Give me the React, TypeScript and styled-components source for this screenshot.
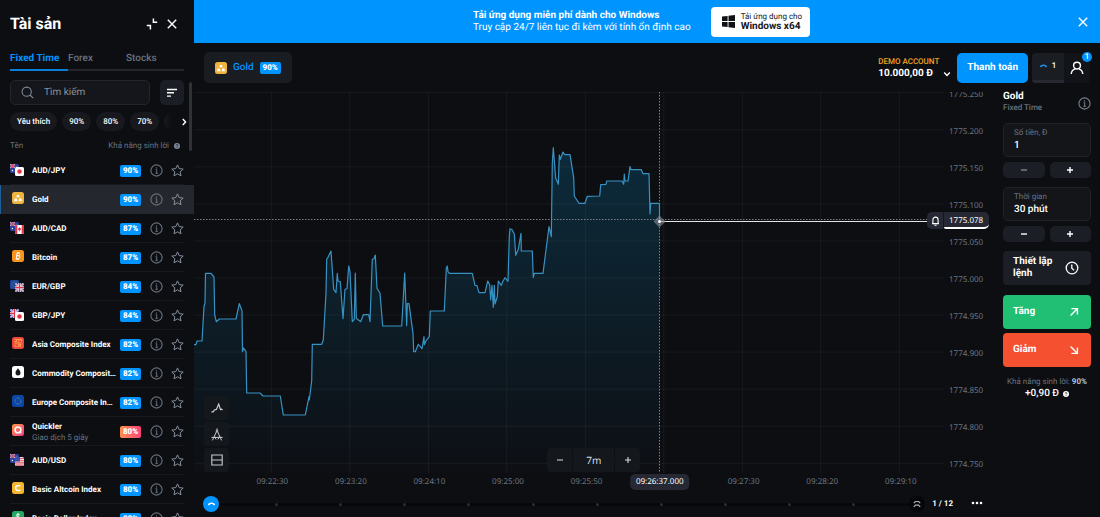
import React from "react";
import styled, { createGlobalStyle, css } from "styled-components";

const c = {
  bg: "#0d0e12",
  panel: "#1b1e24",
  line: "#1b1c21",
  blue: "#0094ff",
  muted: "#69737f",
  white: "#ffffff",
};

const GlobalStyle = createGlobalStyle`
  *, *::before, *::after { box-sizing: border-box; }
  body { margin: 0; background: ${c.bg}; color: ${c.white}; font-family: Roboto, "Liberation Sans", sans-serif; font-size: 8px; line-height: 12px; text-rendering: geometricPrecision; }
  button, input { font: inherit; color: inherit; text-rendering: inherit; background: none; border: 0; padding: 0; margin: 0; min-width: 0; }
  button { cursor: pointer; }
  ul, h1, h2, p { margin: 0; padding: 0; list-style: none; }
  svg { display: block; flex: none; }
`;

const Page = styled.div`
  display: flex;
  height: 100vh;
  overflow: hidden;
`;

/* ---------- Sidebar ---------- */

const Sidebar = styled.aside`
  position: relative;
  flex: none;
  width: 194px;
  display: flex;
  flex-direction: column;
  overflow: hidden;
  & > * { flex: none; }
`;

const SidebarHead = styled.header`
  display: flex;
  align-items: center;
  gap: 8px;
  height: 48px;
  padding: 0 16px 0 10px;
`;

const Title = styled.h1`
  flex: 1;
  font-size: 16px;
  line-height: 20px;
  font-weight: 700;
`;

const IconButton = styled.button`
  display: flex;
  align-items: center;
  justify-content: center;
`;

const Tabs = styled.div`
  display: grid;
  grid-template-columns: repeat(3, 1fr);
  margin: 0 10px;
`;

const Tab = styled.button<{ $active?: boolean }>`
  height: 23px;
  text-align: left;
  font-size: 10px;
  font-weight: ${(p) => (p.$active ? 700 : 500)};
  color: ${(p) => (p.$active ? c.blue : c.muted)};
  border-bottom: 2px solid ${(p) => (p.$active ? "#0b7fd8" : "#24262b")};
`;

const SearchRow = styled.div`
  display: flex;
  gap: 10px;
  margin: 9px 10px 0;
`;

const SearchBox = styled.label`
  flex: 1;
  min-width: 0;
  display: flex;
  align-items: center;
  gap: 10px;
  height: 25px;
  padding: 0 10px;
  border: 1px solid #22252b;
  border-radius: 5px;
  background: #14161b;
  color: #7f8b99;
`;

const SearchInput = styled.input`
  flex: 1;
  outline: none;
  font-size: 10px;
  &::placeholder { color: #8a939e; opacity: 1; }
`;

const FilterButton = styled(IconButton)`
  width: 24px;
  height: 25px;
  border-radius: 5px;
  background: ${c.panel};
`;

const Chips = styled.div`
  display: flex;
  align-items: center;
  gap: 5px;
  height: 19px;
  margin: 7px 6px 0 10px;
`;

const Chip = styled.button`
  flex: none;
  height: 19px;
  padding: 0 7px;
  border-radius: 10px;
  background: #17191e;
  font-weight: 500;
`;

const ChipTail = styled.span`
  width: 8px;
  height: 17px;
  border-radius: 10px 0 0 10px;
  background: linear-gradient(90deg, #17191e, ${c.bg});
`;

const ChipsNext = styled(IconButton)`
  margin-left: auto;
`;

const ListHead = styled.div`
  display: flex;
  justify-content: space-between;
  align-items: center;
  height: 25px;
  padding: 5px 14px 0 10px;
  color: ${c.muted};
`;

const HeadHint = styled.span`
  display: flex;
  align-items: center;
  gap: 5px;
`;

const Thumb = styled.div`
  position: absolute;
  right: 2px;
  top: 82px;
  width: 3px;
  height: 69px;
  border-radius: 2px;
  background: #303237;
`;

const AssetRow = styled.li<{ $selected?: boolean }>`
  display: flex;
  align-items: center;
  height: 29px;
  padding: 0 10px;
  position: relative;
  &::after {
    content: "";
    position: absolute;
    left: 10px;
    right: 10px;
    bottom: 0;
    height: 1px;
    background: #17191d;
  }
  ${(p) =>
    p.$selected &&
    css`
      background: #25272e;
      box-shadow: inset 1px 0 0 #1d5f96;
      &::after { display: none; }
    `}
`;

const AssetName = styled.button`
  flex: 1;
  display: flex;
  align-items: center;
  gap: 7px;
  margin-right: 3px;
  text-align: left;
`;

const NameText = styled.span`
  flex: 1;
  min-width: 0;
  font-weight: 700;
  line-height: 11px;
  overflow: hidden;
  white-space: nowrap;
  text-overflow: ellipsis;
`;

const SubText = styled.span`
  display: block;
  font-weight: 400;
  color: ${c.muted};
`;

const Badge = styled.span<{ $hot?: boolean }>`
  flex: none;
  padding: 0 2px;
  min-width: 21px;
  text-align: center;
  border-radius: 2px;
  font-weight: 900;
  line-height: 12px;
  background: ${(p) => (p.$hot ? "linear-gradient(90deg, #ff8f4a, #f8447e)" : c.blue)};
`;

const RowActions = styled.div`
  display: flex;
  gap: 8px;
  margin-left: 9px;
  color: #68717c;
`;

/* ---------- Main ---------- */

const Main = styled.main`
  flex: 1;
  min-width: 0;
  display: flex;
  flex-direction: column;
`;

const Banner = styled.section`
  flex: none;
  display: flex;
  align-items: center;
  justify-content: center;
  gap: 20px;
  height: 43px;
  padding: 0 11px 0 32px;
  background: ${c.blue};
`;

const BannerText = styled.p`
  margin-left: auto;
  font-size: 10px;
  line-height: 12px;
`;

const DownloadButton = styled.button`
  display: flex;
  align-items: center;
  gap: 6px;
  height: 30px;
  padding: 0 8px 0 11px;
  border-radius: 4px;
  background: ${c.white};
  color: #15171b;
  text-align: left;
  line-height: 10px;
`;

const DownloadTarget = styled.strong`
  display: block;
  font-size: 10px;
  font-weight: 700;
`;

const BannerClose = styled(IconButton)`
  margin-left: auto;
`;

const Header = styled.header`
  flex: none;
  display: flex;
  align-items: center;
  height: 49px;
  padding: 0 10px;
`;

const AssetTab = styled.button`
  display: flex;
  align-items: center;
  gap: 6px;
  height: 31px;
  padding: 0 11px;
  border-radius: 5px;
  background: #191c21;
  color: ${c.blue};
  font-size: 10px;
  font-weight: 500;
`;

const AssetTabBadge = styled(Badge)`
  font-size: 8px;
  color: ${c.white};
`;

const Account = styled.button`
  display: flex;
  align-items: flex-end;
  gap: 4px;
  margin-left: auto;
  text-align: left;
`;

const AccountKind = styled.span`
  display: block;
  color: #f5a623;
  font-weight: 500;
`;

const Balance = styled.span`
  font-size: 10px;
  font-weight: 700;
`;

const ChevronSlot = styled.span`
  padding-bottom: 2px;
`;

const DepositButton = styled.button`
  height: 30px;
  margin: 0 4px 0 6px;
  padding: 0 10px;
  border-radius: 5px;
  background: ${c.blue};
  font-size: 10px;
  font-weight: 700;
`;

const UserGroup = styled.div`
  position: relative;
  display: flex;
  height: 30px;
  border-radius: 4px;
  background: #121419;
`;

const StatusButton = styled(IconButton)`
  width: 32px;
  gap: 5px;
  border-bottom: 3px solid #26292f;
  border-radius: 4px 0 0 4px;
  background: #1a1d22;
  font-weight: 500;
`;

const ProfileButton = styled(IconButton)`
  width: 26px;
`;

const Notice = styled.span`
  position: absolute;
  top: -1px;
  right: -2px;
  width: 10px;
  height: 10px;
  border-radius: 50%;
  background: ${c.blue};
  text-align: center;
  line-height: 10px;
  font-weight: 500;
`;

const Body = styled.div`
  flex: 1;
  min-height: 0;
  display: flex;
`;

/* ---------- Chart ---------- */

const ChartColumn = styled.section`
  flex: 1;
  min-width: 0;
  display: flex;
  flex-direction: column;
  font-family: "Noto Sans", sans-serif;
`;

const Stage = styled.div`
  position: relative;
  flex: 1;
  min-height: 0;
  display: flex;
`;

const Plot = styled.svg`
  flex: 1;
  min-width: 0;
  width: 0;
  height: 100%;
`;

const PriceAxis = styled.div`
  width: 53px;
  overflow: hidden;
`;

const PriceList = styled.ul`
  display: flex;
  flex-direction: column;
  height: 107%;
  margin-top: -16px;
  padding-left: 5px;
  color: #6c7681;
`;

const PriceLabel = styled.li`
  flex: 1;
  display: flex;
  align-items: center;
`;

const PriceTag = styled.div`
  position: absolute;
  top: 31.5%;
  right: 8px;
  display: flex;
  border-radius: 5px;
  background: #262933;
`;

const BellButton = styled(IconButton)`
  width: 17px;
  height: 17px;
  border-right: 1px solid #15171c;
`;

const PriceValue = styled.span`
  width: 45px;
  height: 17px;
  padding: 3px 5px 0;
  border-bottom: 2px solid ${c.white};
  border-radius: 0 5px 5px 2px;
`;

const ToolStack = styled.div`
  position: absolute;
  left: 10px;
  bottom: 1px;
  display: flex;
  flex-direction: column;
  gap: 2px;
`;

const ToolButton = styled(IconButton)`
  width: 25px;
  height: 24px;
  border-radius: 4px;
  background: #14181d;
  color: #c8ccd0;
`;

const ZoomControl = styled.div`
  position: absolute;
  left: 44%;
  bottom: 1px;
  display: flex;
  gap: 1px;
  border-radius: 4px;
  overflow: hidden;
  color: #dadde0;
`;

const ZoomCell = styled.button<{ $wide?: boolean }>`
  display: flex;
  align-items: center;
  justify-content: center;
  width: ${(p) => (p.$wide ? 41 : 25)}px;
  height: 24px;
  background: #14171c;
  font-size: 10px;
`;

const TimeAxis = styled.div`
  position: relative;
  flex: none;
  display: flex;
  height: 18px;
  padding: 0 57px 0 39px;
  align-items: center;
  color: #6c7681;
`;

const TimeLabel = styled.span`
  flex: 1;
  text-align: center;
`;

const TimeTag = styled.span`
  position: absolute;
  left: 58%;
  transform: translateX(-50%);
  padding: 2px 6px;
  border-radius: 5px;
  background: #262933;
  color: ${c.white};
`;

const Pager = styled.div`
  flex: none;
  display: flex;
  align-items: center;
  height: 26px;
  padding: 0 14px 0 9px;
  font-family: Roboto, sans-serif;
`;

const PagerCurrent = styled(IconButton)`
  width: 16px;
  height: 16px;
  border-radius: 50%;
  background: ${c.blue};
`;

const PagerTrack = styled.div`
  flex: 1;
  display: flex;
  align-items: center;
  justify-content: space-between;
  height: 3px;
  padding: 0 54px 0 56px;
  background: #07080b;
`;

const Dot = styled.i`
  width: 3px;
  height: 3px;
  border-radius: 50%;
  background: #2b2e33;
`;

const PagerEnd = styled(IconButton)`
  width: 16px;
  height: 16px;
  border-radius: 50%;
  background: #050608;
  color: #a9b2ba;
`;

const PagerCount = styled.span`
  margin: 0 18px 0 7px;
  font-weight: 700;
`;

/* ---------- Trade panel ---------- */

const Trade = styled.form`
  flex: none;
  width: 103px;
  padding: 0 9px 0 6px;
`;

const TradeHead = styled.div`
  display: flex;
  align-items: center;
  justify-content: space-between;
  height: 22px;
  margin-bottom: 9px;
  color: #7b848e;
`;

const TradeTitle = styled.h2`
  color: ${c.white};
  font-size: 10px;
  line-height: 10px;
  font-weight: 700;
`;

const TradeKind = styled.p`
  color: ${c.muted};
  font-weight: 500;
`;

const Field = styled.label`
  display: block;
  height: 34px;
  padding: 3px 10px;
  border: 1px solid #202228;
  border-radius: 5px;
  background: #131519;
  color: ${c.muted};
`;

const FieldInput = styled.input`
  display: block;
  width: 100%;
  height: 13px;
  outline: none;
  color: ${c.white};
  font-size: 10px;
  font-weight: 500;
`;

const Stepper = styled.div`
  display: grid;
  grid-template-columns: 1fr 1fr;
  gap: 5px;
  margin: 5px 0 9px;
`;

const StepButton = styled(IconButton)`
  height: 16px;
  border-radius: 5px;
  background: ${c.panel};
  &:disabled { color: #7b848e; }
`;

const ActionButton = styled.button<{ $tone?: string }>`
  display: flex;
  align-items: center;
  justify-content: space-between;
  width: 100%;
  height: 34px;
  margin-bottom: ${(p) => (p.$tone ? 4 : 10)}px;
  padding: 0 12px 0 10px;
  border-radius: 4px;
  background: ${(p) => p.$tone ?? c.panel};
  font-size: 10px;
  line-height: 12px;
  font-weight: 700;
  text-align: left;
`;

const Profit = styled.p`
  padding-top: 5px;
  text-align: center;
  white-space: nowrap;
  color: ${c.muted};
`;

const ProfitRate = styled.b`
  color: #b3c3d6;
  font-weight: 700;
`;

const ProfitSum = styled.p`
  display: flex;
  align-items: center;
  justify-content: center;
  gap: 4px;
  font-size: 10px;
  font-weight: 500;
`;

/* ---------- Icons ---------- */

const InfoIcon = () => (
  <svg width="13" height="13" viewBox="0 0 13 13" fill="none" stroke="currentColor">
    <circle cx="6.5" cy="6.5" r="5.6" strokeWidth="1.1" />
    <path d="M5.6 5.7h1.1v3.6M5.4 9.3h2.4" strokeWidth="1" />
    <circle cx="6.5" cy="3.9" r=".7" fill="currentColor" stroke="none" />
  </svg>
);

const StarIcon = () => (
  <svg width="13" height="13" viewBox="0 0 13 13" fill="none" stroke="#84909c" strokeWidth="1" strokeLinejoin="round">
    <path d="M6.5 .9 8.2 4.6l4 .5-3 2.7.8 4L6.5 9.8 3 11.8l.8-4-3-2.7 4-.5z" />
  </svg>
);

const CloseIcon = () => (
  <svg width="12" height="12" viewBox="0 0 12 12" stroke="#fff" strokeWidth="1.4">
    <path d="m1.8 1.8 8.4 8.4M10.2 1.8l-8.4 8.4" />
  </svg>
);

const CollapseIcon = () => (
  <svg width="12" height="12" viewBox="0 0 12 12" fill="none" stroke="#fff" strokeWidth="1.5">
    <path d="M7.4 .6v3.600h3.800M.8 7.600h3.600v3.800" />
  </svg>
);

const SearchIcon = () => (
  <svg width="13" height="13" viewBox="0 0 13 13" fill="none" stroke="currentColor" strokeWidth="1.1">
    <circle cx="5.7" cy="5.7" r="4.6" />
    <path d="m9 9 3.2 3.2" />
  </svg>
);

const FilterIcon = () => (
  <svg width="12" height="10" viewBox="0 0 12 10" stroke="#fff" strokeWidth="1.4">
    <path d="M1 1.5h10M1 4.8h7M1 8.1h4" />
  </svg>
);

const ChevronIcon = ({ down }: { down?: boolean }) => (
  <svg width="8" height="8" viewBox="0 0 8 8" fill="none" stroke="#fff" strokeWidth="1.4">
    <path d={down ? "m1.2 2.6 2.8 2.8 2.8-2.8" : "m2.8 1 2.8 3-2.8 3"} />
  </svg>
);

const HelpIcon = ({ color }: { color: string }) => (
  <svg width="6" height="6" viewBox="0 0 6 6">
    <circle cx="3" cy="3" r="3" fill={color} />
    <path d="M2.1 2.4c0-1.2 1.8-1.2 1.8 0 0 .6-.9.6-.9 1.2M3 4.1v.7" fill="none" stroke={c.bg} strokeWidth=".7" />
  </svg>
);

const WindowsIcon = () => (
  <svg width="13" height="13" viewBox="0 0 13 13" fill="#101216">
    <path d="M0 1.600 5.600.9v5.200H0zM6.500.8 13 0v6.100H6.500zM0 7h5.600v5.100L0 11.400zM6.500 7H13v6l-6.500-.8z" />
  </svg>
);

const ProfileIcon = () => (
  <svg width="14" height="14" viewBox="0 0 14 14" fill="none" stroke="#fff" strokeWidth="1.4">
    <circle cx="7" cy="4.6" r="3.4" />
    <path d="M1.2 13c.3-3 2-4.6 4-5.2M12.8 13c-.3-3-2-4.6-4-5.2" />
  </svg>
);

const ArcIcon = ({ color }: { color: string }) => (
  <svg width="7" height="4" viewBox="0 0 7 4" fill="none" stroke={color} strokeWidth="1.700">
    <path d="M.4 3C1.500 .9 5 .4 6.600 3" />
  </svg>
);

const PlusMinusIcon = ({ plus, thin }: { plus?: boolean; thin?: boolean }) => (
  <svg width="8" height="8" viewBox="0 0 8 8" stroke="currentColor" strokeWidth={thin ? 1.1 : 1.4}>
    <path d={plus ? "M1 4h6M4 1v6" : "M1 4h6"} />
  </svg>
);

const ClockIcon = () => (
  <svg width="14" height="14" viewBox="0 0 14 14" fill="none" stroke="#fff" strokeWidth="1.3">
    <circle cx="7" cy="7" r="5.8" />
    <path d="M6.8 3.4v3.8l2.2 2" />
  </svg>
);

const ArrowIcon = ({ down }: { down?: boolean }) => (
  <svg width="10" height="10" viewBox="0 0 10 10" fill="none" stroke="#fff" strokeWidth="1.4">
    <path d={down ? "m1.600 1.600 6.400 6.400M8.400 2.400v6H2.400" : "m1.600 8.400 6.400-6.400M2.400 1.600h6v6"} />
  </svg>
);

const BellIcon = () => (
  <svg width="9" height="10" viewBox="0 0 9 10" fill="none" stroke="#fff" strokeWidth="1.1">
    <path d="M1 7.6h7M1.9 7.4V4c0-3.8 5.2-3.8 5.2 0v3.4M3.4 9.2h2.2" />
  </svg>
);

const ChartTypeIcon = () => (
  <svg width="12" height="10" viewBox="0 0 12 10" fill="none" stroke="currentColor" strokeWidth="1.2">
    <path d="M.4 8.800h1.800l1.200-1.800 2-.6L7.700 1l1.700 5.400 1-.3 1.200.9" />
  </svg>
);

const CompassIcon = () => (
  <svg width="12" height="13" viewBox="0 0 12 13" fill="none" stroke="currentColor" strokeWidth="1">
    <path d="M6 .4v1.800M5.500 3.600 1.400 12.400M6.500 3.600l4.100 8.800M.4 9.400h11.200M3.600 8.400 5 11.400M8.400 8.400 7 11.400" />
    <circle cx="6" cy="3" r=".9" />
  </svg>
);

const LayoutIcon = () => (
  <svg width="12" height="12" viewBox="0 0 12 12" fill="none" stroke="currentColor" strokeWidth="1.1">
    <path d="M.8 1h10.400v10H.8zM.8 6h10.400" />
  </svg>
);

const DoubleUpIcon = () => (
  <svg width="8" height="8" viewBox="0 0 8 8" fill="none" stroke="currentColor" strokeWidth="1.200">
    <path d="M.8 3.200 2.400 1.500h3.200L7.200 3.200M.8 6.800l1.600-1.700h3.200l1.600 1.700" />
  </svg>
);

const MoreIcon = () => (
  <svg width="12" height="6" viewBox="0 0 12 6" fill="#fff">
    <circle cx="2" cy="2" r="1.300" />
    <circle cx="6" cy="2" r="1.300" />
    <circle cx="10" cy="2" r="1.300" />
  </svg>
);

type FlagCode = "au" | "jp" | "ca" | "eu" | "gb" | "us";

/* Each flag is drawn in a 9 x 9 rounded tile. */
const flagArt: Record<FlagCode, React.ReactNode> = {
  au: (
    <>
      <rect width="9" height="9" rx="1.500" fill="#2b3f9e" />
      <path d="M0 0h5v4H0z" fill="#5468b8" />
      <path d="M0 0l5 4M5 0 0 4" stroke="#e9c9d4" strokeWidth=".7" />
      <path d="M2.500 0v4M0 2h5" stroke="#e0455c" strokeWidth=".8" />
      <circle cx="2.400" cy="6.500" r=".7" fill="#fff" />
      <circle cx="6.800" cy="3" r=".5" fill="#fff" />
      <circle cx="6.800" cy="6.800" r=".5" fill="#fff" />
    </>
  ),
  jp: (
    <>
      <rect width="9" height="9" rx="1.500" fill="#fff" />
      <circle cx="4.500" cy="4.500" r="2.200" fill="#e8303f" />
    </>
  ),
  ca: (
    <>
      <rect width="9" height="9" rx="1.500" fill="#fff" />
      <path d="M1.500 0H2.300v9H1.500A1.500 1.500 0 0 1 0 7.500v-6A1.500 1.500 0 0 1 1.500 0zM7.500 0h-.8v9h.8A1.500 1.500 0 0 0 9 7.500v-6A1.500 1.500 0 0 0 7.500 0z" fill="#e5354a" />
      <path d="m4.500 2 .7 1.200.9 0-.4 1.800-1 .8v1h-.4v-1l-1-.8-.4-1.800h.9z" fill="#e5354a" />
    </>
  ),
  eu: (
    <>
      <rect width="9" height="9" rx="1.500" fill="#1b469c" />
      <circle cx="4.500" cy="4.500" r="2.500" fill="none" stroke="#8f9a5c" strokeWidth=".7" strokeDasharray=".7 .6" />
    </>
  ),
  gb: (
    <>
      <rect width="9" height="9" rx="1.500" fill="#2c46a4" />
      <path d="m.5.5 8 8M8.500.5l-8 8" stroke="#fff" strokeWidth="1.500" />
      <path d="m.5.5 8 8M8.500.5l-8 8" stroke="#e0455c" strokeWidth=".5" />
      <path d="M4.500 0v9M0 4.500h9" stroke="#fff" strokeWidth="2.400" />
      <path d="M4.500 0v9M0 4.500h9" stroke="#e0354c" strokeWidth="1.300" />
    </>
  ),
  us: (
    <>
      <rect width="9" height="9" rx="1.500" fill="#f0dfe4" />
      <path d="M0 1.500h9M0 3.700h9M0 5.900h9M.5 8.100h8" stroke="#d9586a" strokeWidth="1.100" />
      <path d="M0 1.500A1.500 1.500 0 0 1 1.500 0H5v4.500H0z" fill="#37509f" />
    </>
  ),
};

const FlagPair = ({ a, b }: { a: FlagCode; b: FlagCode }) => (
  <svg width="15" height="15" viewBox="0 0 15 15">
    <g transform="translate(0 1)">{flagArt[a]}</g>
    <g transform="translate(5 4)">{flagArt[b]}</g>
  </svg>
);

type TileKind = "gold" | "bitcoin" | "asia" | "commodity" | "europe" | "quickler" | "altcoin" | "dollar";

const tileArt: Record<TileKind, { fill: string; art: React.ReactNode }> = {
  gold: {
    fill: "#eeb43d",
    art: <path d="m5 3h2l.7 2.300H4.300zM2.700 6.400h2l.8 2.800H1.800zM7.300 6.400h2l.9 2.800H6.500z" fill="#fff" />,
  },
  bitcoin: {
    fill: "#f7931a",
    art: (
      <path
        d="M4.800 3.200h2c1.700 0 1.500 2.500-.2 2.500H4.800m1.600 0c2 0 1.800 3-.3 3H3.700M5 3.200 4.300 8.700M5.600 2v1.200M7 2.200l-.1 1M5 8.800l-.2 1.200M6.400 8.800l-.1 1.100"
        fill="none"
        stroke="#fff"
        strokeWidth="1"
      />
    ),
  },
  asia: {
    fill: "#f2453f",
    art: (
      <path
        d="M2.500 2.500h2.200v2H2.500M5.200 2.500h1.800v2M7.600 2.500h2v2.200M2.500 6h7M3 7.400v2.200h1.700M5.500 7.400h1.600v2H5.500M9.500 7.400H8v2.200h1.500"
        fill="none"
        stroke="#ffb347"
        strokeWidth=".9"
      />
    ),
  },
  commodity: {
    fill: "#ffffff",
    art: <path d="M6 2.300c1.200 1.600 2.500 2.800 2.500 4.400a2.500 2.700 0 0 1-5 0C3.500 5.100 4.800 3.900 6 2.300z" fill="#17191d" />,
  },
  europe: {
    fill: "#0b47a8",
    art: <circle cx="6" cy="6" r="3" fill="none" stroke="#8e9a78" strokeWidth=".8" strokeDasharray=".8 .77" />,
  },
  quickler: {
    fill: "url(#quickler)",
    art: (
      <>
        <circle cx="6" cy="5.900" r="2.900" fill="none" stroke="#fff" strokeWidth="1.500" />
        <path d="m7.400 7.600 1.800 1.600" stroke="#fff" strokeWidth="1.400" />
      </>
    ),
  },
  altcoin: {
    fill: "#f6b52e",
    art: <path d="M8.200 4.300a2.600 2.600 0 1 0 0 3.400" fill="none" stroke="#fff" strokeWidth="1.500" />,
  },
  dollar: {
    fill: "#21a862",
    art: <path d="M7.800 4c-.8-1.200-3.600-1-3.500.5.1 1.800 3.600 1 3.600 3 0 1.600-3 1.600-3.800.2M6 2v8" fill="none" stroke="#fff" strokeWidth="1" />,
  },
};

const Tile = ({ kind }: { kind: TileKind }) => (
  <svg width="12" height="12" viewBox="0 0 12 12">
    <defs>
      <linearGradient id="quickler" x1="0" y1="0" x2="1" y2="1">
        <stop offset="0" stopColor="#ff9a45" />
        <stop offset="1" stopColor="#f23a86" />
      </linearGradient>
    </defs>
    <rect width="12" height="12" rx="2.500" fill={tileArt[kind].fill} />
    {tileArt[kind].art}
  </svg>
);

const IconSlot = styled.span`
  flex: none;
  width: 15px;
  height: 16px;
  display: flex;
  justify-content: center;
`;

/* ---------- Data ---------- */

type Asset = { name: string; rate: string; icon: React.ReactNode; note?: string; selected?: boolean };

const assets: Asset[] = [
  { name: "AUD/JPY", rate: "90%", icon: <FlagPair a="au" b="jp" /> },
  { name: "Gold", rate: "90%", icon: <Tile kind="gold" />, selected: true },
  { name: "AUD/CAD", rate: "87%", icon: <FlagPair a="au" b="ca" /> },
  { name: "Bitcoin", rate: "87%", icon: <Tile kind="bitcoin" /> },
  { name: "EUR/GBP", rate: "84%", icon: <FlagPair a="eu" b="gb" /> },
  { name: "GBP/JPY", rate: "84%", icon: <FlagPair a="gb" b="jp" /> },
  { name: "Asia Composite Index", rate: "82%", icon: <Tile kind="asia" /> },
  { name: "Commodity Composite Index", rate: "82%", icon: <Tile kind="commodity" /> },
  { name: "Europe Composite Index", rate: "82%", icon: <Tile kind="europe" /> },
  { name: "Quickler", rate: "80%", icon: <Tile kind="quickler" />, note: "Giao dịch 5 giây" },
  { name: "AUD/USD", rate: "80%", icon: <FlagPair a="au" b="us" /> },
  { name: "Basic Altcoin Index", rate: "80%", icon: <Tile kind="altcoin" /> },
  { name: "Basic Dollar Index", rate: "80%", icon: <Tile kind="dollar" /> },
];

const prices = ["1775.250", "1775.200", "1775.150", "1775.100", "1775.050", "1775.000", "1774.950", "1774.900", "1774.850", "1774.800", "1774.750"];
const times = ["09:22:30", "09:23:20", "09:24:10", "09:25:00", "09:25:50", "", "09:27:30", "09:28:20", "09:29:10"];

const W = 750;
const H = 381;
const NOW_X = 465.5;
const NOW_Y = 129.5;

const series =
  "0,252.7 2,252.7 3,249 8,249 10,214.5 11,211 11.5,181.3 17,181.3 20,185 20.7,223 22.3,229.7 25.3,227 42,227 45.3,211.7 48,218.7 48.5,259.7 49.3,256 52,259.3 52.7,301 66,301 69,304 86.3,304 89.3,323 111.3,323 115,304.7 115.3,308 117.7,288.7 118.3,252.3 127.7,252.3 129.3,248 132,201 132.7,167 134,165.3 137,159 139.7,197.3 142,200.7 143.3,181.3 144,189 146.3,189.7 149,226.7 151,197.3 153,196.7 154.7,174 156,179.7 158.3,229.7 160.3,227.3 161.3,181 162.3,226.3 166.7,229.7 169.3,222.7 174.7,222.7 176,229.7 178.3,167.3 180,166.7 181.3,163 183,196.3 186,201.3 188.7,234 207.7,234 210.7,181 212.7,233.7 213.3,211.7 215,211.7 219,241.3 219.7,259.7 221.3,259.7 224.3,252.3 228,256.7 230,244.7 230.3,252.7 232.3,248.3 235.3,244.7 236.3,219 250.3,219 252.3,176.3 253.3,174 254,179.7 255.3,181.3 278.3,181.3 281,193.3 283,193.7 285,200.7 291,200.7 293.7,189 295.7,193 296.7,208 298,193.3 299.3,215.3 300.3,193.3 301,212 303.3,204.7 304.3,189 307.3,193.3 309,189 311,185.7 314,189.3 315.3,144.7 316,136.7 318,137.7 320.3,142 321.7,163.3 324.3,157.3 327,141.3 327.3,159 338.3,159 339.3,185.3 340.3,181.3 349,181.3 355,134.7 357.3,144.7 358.3,71.3 359.3,55.7 361.7,86.3 364.3,92.3 365.3,63 366.3,67.3 369,60 370.7,62.7 376,62.7 379.7,85.7 380.3,104 385,111.3 391,111.3 393.3,104.3 405.7,104 406.7,92.7 412,92.3 412.7,89 428,89 429.7,92.3 430.3,82 431,89 434,89 436,74.7 437,77.7 447.3,77.7 449,81.7 455,81.7 456,122 456.7,111.3 465.5,111.3 465.5,129.5";

const PriceChart = () => (
  <Plot viewBox={`0 0 ${W} ${H}`} preserveAspectRatio="none" role="img" aria-label="Gold">
    <defs>
      <linearGradient id="area" gradientUnits="userSpaceOnUse" x1="0" y1="55" x2="0" y2={H}>
        <stop offset="0" stopColor="#0c2b3c" />
        <stop offset=".5" stopColor="#0d1e28" />
        <stop offset="1" stopColor="#0d0f14" />
      </linearGradient>
    </defs>
    <polygon points={`0,${H} ${series} ${NOW_X},${H}`} fill="url(#area)" />
    {prices.map((p, i) => (
      <path key={p} d={`M0 ${0.7 + i * 37.06}H${W}`} stroke="#fff" strokeOpacity=".05" />
    ))}
    {times.map((t, i) => (
      <path key={i} d={`M${77.3 + i * 78.5} 0V${H}`} stroke="#fff" strokeOpacity=".05" />
    ))}
    <polyline points={series} fill="none" stroke="#3792c4" strokeWidth="1.2" strokeLinejoin="round" />
    <path d={`M0 127.500H${W}`} stroke="#7c8085" strokeDasharray="1.500 1.500" />
    <path d={`M${NOW_X} 0V${H}`} stroke="#7c8085" strokeDasharray="1.500 1.500" />
    <path d={`M${NOW_X} ${NOW_Y}H${W}`} stroke="#e4e4e4" />
    <path d={`M${NOW_X} ${NOW_Y - 6}l6 6-6 6-6-6z`} fill="#8a9096" fillOpacity=".6" />
    <circle cx={NOW_X} cy={NOW_Y} r="1.500" fill="#fff" />
  </Plot>
);

export default function App() {
  return (
    <Page>
      <GlobalStyle />
      <Sidebar>
        <SidebarHead>
          <Title>Tài sản</Title>
          <IconButton aria-label="Thu gọn"><CollapseIcon /></IconButton>
          <IconButton aria-label="Đóng"><CloseIcon /></IconButton>
        </SidebarHead>
        <Tabs role="tablist">
          <Tab role="tab" aria-selected $active>Fixed Time</Tab>
          <Tab role="tab">Forex</Tab>
          <Tab role="tab">Stocks</Tab>
        </Tabs>
        <SearchRow>
          <SearchBox>
            <SearchIcon />
            <SearchInput type="text" placeholder="Tìm kiếm" aria-label="Tìm kiếm" />
          </SearchBox>
          <FilterButton aria-label="Sắp xếp"><FilterIcon /></FilterButton>
        </SearchRow>
        <Chips>
          <Chip>Yêu thích</Chip>
          <Chip>90%</Chip>
          <Chip>80%</Chip>
          <Chip>70%</Chip>
          <ChipTail />
          <ChipsNext aria-label="Tiếp"><ChevronIcon /></ChipsNext>
        </Chips>
        <ListHead>
          <span>Tên</span>
          <HeadHint>Khả năng sinh lời <HelpIcon color="#7d8996" /></HeadHint>
        </ListHead>
        <Thumb />
        <ul>
          {assets.map((a) => (
            <AssetRow key={a.name} $selected={a.selected}>
              <AssetName>
                <IconSlot>{a.icon}</IconSlot>
                <NameText>
                  {a.name}
                  {a.note && <SubText>{a.note}</SubText>}
                </NameText>
              </AssetName>
              <Badge $hot={!!a.note}>{a.rate}</Badge>
              <RowActions>
                <IconButton aria-label="Thông tin"><InfoIcon /></IconButton>
                <IconButton aria-label="Yêu thích"><StarIcon /></IconButton>
              </RowActions>
            </AssetRow>
          ))}
        </ul>
      </Sidebar>

      <Main>
        <Banner>
          <BannerText>
            <strong>Tải ứng dụng miễn phí dành cho Windows</strong>
            <br />
            Truy cập 24/7 liên tục đi kèm với tính ổn định cao
          </BannerText>
          <DownloadButton>
            <WindowsIcon />
            <span>
              Tải ứng dụng cho
              <DownloadTarget>Windows x64</DownloadTarget>
            </span>
          </DownloadButton>
          <BannerClose aria-label="Đóng"><CloseIcon /></BannerClose>
        </Banner>

        <Header>
          <AssetTab>
            <Tile kind="gold" />
            Gold
            <AssetTabBadge>90%</AssetTabBadge>
          </AssetTab>
          <Account>
            <span>
              <AccountKind>DEMO ACCOUNT</AccountKind>
              <Balance>10.000,00 Đ</Balance>
            </span>
            <ChevronSlot><ChevronIcon down /></ChevronSlot>
          </Account>
          <DepositButton>Thanh toán</DepositButton>
          <UserGroup>
            <StatusButton><ArcIcon color="#1a94ef" />1</StatusButton>
            <ProfileButton aria-label="Hồ sơ"><ProfileIcon /></ProfileButton>
            <Notice>1</Notice>
          </UserGroup>
        </Header>

        <Body>
          <ChartColumn>
            <Stage>
              <PriceChart />
              <PriceAxis>
                <PriceList>
                  {prices.map((p) => <PriceLabel key={p}>{p}</PriceLabel>)}
                </PriceList>
              </PriceAxis>
              <PriceTag>
                <BellButton aria-label="Thông báo giá"><BellIcon /></BellButton>
                <PriceValue>1775.078</PriceValue>
              </PriceTag>
              <ToolStack>
                <ToolButton aria-label="Loại biểu đồ"><ChartTypeIcon /></ToolButton>
                <ToolButton aria-label="Công cụ vẽ"><CompassIcon /></ToolButton>
                <ToolButton aria-label="Bố cục"><LayoutIcon /></ToolButton>
              </ToolStack>
              <ZoomControl>
                <ZoomCell aria-label="Thu nhỏ"><PlusMinusIcon thin /></ZoomCell>
                <ZoomCell $wide>7m</ZoomCell>
                <ZoomCell aria-label="Phóng to"><PlusMinusIcon plus thin /></ZoomCell>
              </ZoomControl>
            </Stage>
            <TimeAxis>
              {times.map((t, i) => <TimeLabel key={i}>{t}</TimeLabel>)}
              <TimeTag>09:26:37.000</TimeTag>
            </TimeAxis>
            <Pager>
              <PagerCurrent aria-label="Trang 1"><ArcIcon color="#fff" /></PagerCurrent>
              <PagerTrack>
                {Array.from({ length: 10 }, (_, i) => <Dot key={i} />)}
              </PagerTrack>
              <PagerEnd aria-label="Cấp cuối"><DoubleUpIcon /></PagerEnd>
              <PagerCount>1 / 12</PagerCount>
              <IconButton aria-label="Thêm"><MoreIcon /></IconButton>
            </Pager>
          </ChartColumn>

          <Trade onSubmit={(e) => e.preventDefault()}>
            <TradeHead>
              <div>
                <TradeTitle>Gold</TradeTitle>
                <TradeKind>Fixed Time</TradeKind>
              </div>
              <InfoIcon />
            </TradeHead>
            <Field>
              Số tiền, Đ
              <FieldInput type="text" defaultValue="1" />
            </Field>
            <Stepper>
              <StepButton type="button" disabled aria-label="Giảm số tiền"><PlusMinusIcon /></StepButton>
              <StepButton type="button" aria-label="Tăng số tiền"><PlusMinusIcon plus /></StepButton>
            </Stepper>
            <Field>
              Thời gian
              <FieldInput type="text" defaultValue="30 phút" />
            </Field>
            <Stepper>
              <StepButton type="button" aria-label="Giảm thời gian"><PlusMinusIcon /></StepButton>
              <StepButton type="button" aria-label="Tăng thời gian"><PlusMinusIcon plus /></StepButton>
            </Stepper>
            <ActionButton type="button">
              <span>Thiết lập<br />lệnh</span>
              <ClockIcon />
            </ActionButton>
            <ActionButton type="submit" $tone="#20bf73">Tăng <ArrowIcon /></ActionButton>
            <ActionButton type="submit" $tone="#f55030">Giảm <ArrowIcon down /></ActionButton>
            <Profit>Khả năng sinh lời: <ProfitRate>90%</ProfitRate></Profit>
            <ProfitSum>+0,90 Đ <HelpIcon color="#fff" /></ProfitSum>
          </Trade>
        </Body>
      </Main>
    </Page>
  );
}
